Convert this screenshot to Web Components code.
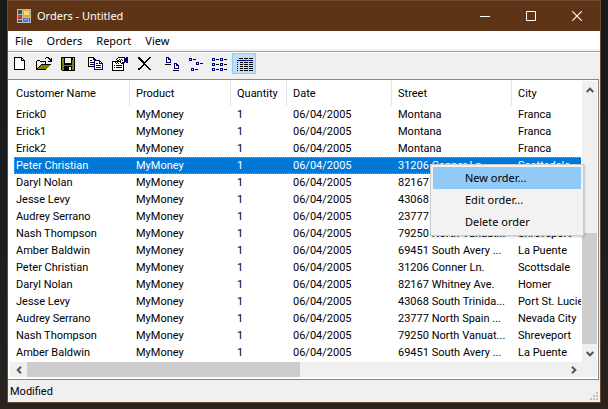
<!DOCTYPE html>
<html lang="en">
<head>
<meta charset="utf-8">
<title>Orders - Untitled</title>
<style>
  html { min-height: 100%; background: linear-gradient(#18191b, #1b1c1e 55%, #28231e); }
  body { margin: 0; font: 11px/17px Roboto, "Liberation Sans", sans-serif; color: #000; }
</style>
</head>
<body>
<orders-app></orders-app>

<script>
const make = (name, html, extra) => customElements.define(name, class extends HTMLElement {
  connectedCallback() {
    if (this.shadowRoot) return;
    const root = this.attachShadow({ mode: 'open' });
    const t = document.createElement('template');
    t.innerHTML = html;
    root.append(t.content.cloneNode(true));
    if (extra) extra(this, root);
  }
});

/* Window frame */
make('app-window', `
<style>
  :host { display: block; padding: 0 7px; }
  .frame { position: relative; border: 1px solid #6f482e; background: #f0f0f0; }
</style>
<div class="frame"><slot></slot><slot name="popup"></slot></div>`);

make('title-bar', `
<style>
  :host { display: flex; align-items: center; height: 30px; padding-left: 9px; background: #5e3417; color: #fff;
    font: 11px/16px "Noto Sans", "Open Sans", sans-serif; }
  h1 { flex: 1; margin: 0 0 0 6px; font: inherit; white-space: nowrap; }
  button { width: 46px; height: 30px; padding: 0; border: 0; background: none; color: #fff; }
  svg { display: block; margin: auto; }
</style>
<svg width="14" height="14" style="margin:0" shape-rendering="crispEdges" aria-hidden="true">
  <path fill="#b9b9b9" d="M0 0h14v14H0z"/><path fill="#4d4d4d" d="M1 1h4v4H1zM1 11h4v2H1z"/>
  <path fill="#c63325" d="M1 6h4v4H1z"/><path fill="#e9674a" d="M2 7h1v1H2z"/>
  <path fill="#e8a91d" d="M6 1h7v7H6z"/><path fill="#f9dc6c" d="M7 2h5v4H7z"/>
  <path fill="#3c78d8" d="M6 9h5v4H6z"/><path fill="#86b5ef" d="M7 10h3v1H7z"/><path fill="#555" d="M12 9h1v4h-1z"/>
</svg>
<h1><slot></slot></h1>
<button aria-label="Minimize"><svg width="10" height="10" shape-rendering="crispEdges"><path fill="#fff" d="M0 5h10v1H0z"/></svg></button>
<button aria-label="Maximize"><svg width="10" height="10"><path fill="none" stroke="#fff" d="M.5.5h9v9h-9z"/></svg></button>
<button aria-label="Close"><svg width="10" height="10"><path fill="none" stroke="#fff" stroke-width="1.2" d="M.3.3l9.4 9.4M9.7.3L.3 9.7"/></svg></button>`);

make('menu-bar', `
<style>
  :host { display: flex; height: 18px; background: #fff; border-bottom: 2px solid #f0f0f0;
    font: 11px/20px "Noto Sans", "Open Sans", sans-serif; }
</style>
<slot></slot>`);

make('menu-button', `
<style>
  button { display: block; padding: 0 7px; border: 0; background: none; color: inherit; font: inherit; }
</style>
<button><slot></slot></button>`);

/* Toolbar */
const box = (x, y) => `<path fill="#000080" fill-rule="evenodd" d="M${x} ${y}h3v3h-3zM${x + 1} ${y + 1}h1v1h-1z"/><path d="M${x + 4} ${y + 1}h3v1h-3z"/>`;
const big = (x, y) => `<path fill="#fff" d="M${x} ${y}h4v5h-4z"/><path fill="#000080" fill-rule="evenodd" d="M${x} ${y}h3v1h1v1h1v4h-5zM${x + 1} ${y + 1}v4h3v-2h-2v-2z"/><path d="M${x - 1} ${y + 7}h6v1h-6z"/>`;
const icons = {
  new: `<path d="M2 1h8v1h1v1h1v1h1v10H2z"/><path fill="#fff" d="M3 2h6v3h3v8H3z"/><path fill="#fff" d="M10 3h1v1h-1z"/>`,
  open: `<path d="M9 2h1V1h3v1h1v1h1V2h1v4h-4V5h2V4h-1V3h-1V2h-2v1H9zM1 4h3v1h6v3h5v1h-1v1h-1v1h-1v1h-1v1h-1v1H0V5h1z"/>
    <path fill="#ff0" d="M1 5h3v1h5v2H5v1H4v1H3v1H2v1H1z"/>
    <path fill="#fff" d="M1 5h1v1H1zM3 5h1v1H3zM2 6h1v1H2zM4 6h1v1H4zM6 6h1v1H6zM8 6h1v1H8zM1 7h1v1H1zM3 7h1v1H3zM5 7h1v1H5zM7 7h1v1H7zM2 8h1v1H2zM4 8h1v1H4zM1 9h1v1H1zM3 9h1v1H3zM2 10h1v1H2z"/>
    <path fill="#808000" d="M5 9h9v1h-1v1h-1v1h-1v1H2v-1h1v-1h1v-1h1z"/>`,
  save: `<path d="M1 1h14v14H2v-1H1z"/><path fill="#808000" d="M2 2h2v7h8V4h1V2h1v12h-2v-4H4v4H2z"/><path fill="#f0f0f0" d="M5 2h6v5H5zM13 2h1v1h-1zM9 11h2v3H9z"/>`,
  copy: `<path d="M0 1h6v1h1v1h1v8H0z"/><path fill="#fff" d="M1 2h4v2h2v6H1z"/><path d="M2 4h2v1H2zM2 6h4v1H2zM2 8h4v1H2z"/>
    <path fill="#000080" d="M6 4h6v1h1v1h1v1h1v7H6z"/><path fill="#fff" d="M7 5h4v3h3v5H7zM12 6h1v1h-1z"/><path fill="#000080" d="M8 7h2v1H8zM8 9h5v1H8zM8 11h5v1H8z"/>`,
  props: `<path d="M0 5h12v10H0z"/><path fill="#fff" d="M1 6h10v8H1z"/><path d="M2 9h1v1H2zM4 9h6v1H4zM2 11h1v1H2zM4 11h6v1H4z"/>
    <path d="M6 1h7v6h-2v1H9V7H8V6H7V5H5V4H4V3h1V2h1z"/><path fill="#fff" d="M6 2h6v4h-2v1H9V5H7V4H5V3h1z"/>
    <path d="M7 3h1v1H7zM9 3h1v1H9zM8 4h1v1H8zM10 4h1v1h-1zM3 6h1v1H3zM5 6h1v1H5zM4 7h1v1H4zM6 7h1v1H6z"/>
    <path fill="#000080" d="M12 2h2V1h2v6h-2V6h-2z"/>`,
  delete: `<path d="M2 1h2v1h1v1h1v1h1v1h1v1h1V5h1V4h1V3h1V2h1V1h2v1h-1v1h-1v1h-1v1h-1v1h-1v1h-1v1h1v1h1v1h1v1h1v1h1v1h1v1h-2v-1h-1v-1h-1v-1h-1v-1H9V9H8v1H7v1H6v1H5v1H4v1H2v-2h2v-1h1v-1h1V9h1V7H6V6H5V5H4V4H3V3H2z"/>`,
  large: big(2, 1) + big(10, 7),
  small: box(1, 2) + box(8, 6) + box(3, 12),
  list: [2, 7, 12].map(y => box(0, y) + box(8, y)).join(''),
  details: `<path d="M3 2h4v1H3zM8 2h4v1H8zM13 2h4v1h-4z"/><path fill="#000080" d="M1 4h16v1H1z"/>` +
    [6, 8, 10, 12, 14].map(y => `<path fill="#000080" d="M1 ${y}h1v1H1z"/><path d="M4 ${y}h3v1H4zM8 ${y}h4v1H8zM13 ${y}h4v1h-4z"/>`).join('')
};

make('tool-bar', `
<style>
  :host { display: flex; padding: 1px 0 5px; border-top: 1px solid #a0a0a0; box-shadow: inset 0 1px #fff; }
</style>
<slot></slot>`);

make('tool-gap', `<style>:host { width: 4px; }</style>`);

make('tool-button', `
<style>
  button { display: flex; align-items: center; justify-content: center; width: 24px; height: 21px; padding: 0; border: 1px solid transparent; background: none; }
  :host([pressed]) button { background: #c2def5; border-color: #90c8f6; }
  svg { display: block; overflow: visible; }
</style>
<button><svg width="16" height="16" shape-rendering="crispEdges" aria-hidden="true"></svg></button>`,
(host, root) => {
  const b = root.querySelector('button');
  b.setAttribute('aria-label', host.getAttribute('label'));
  if (host.hasAttribute('pressed')) b.setAttribute('aria-pressed', 'true');
  root.querySelector('svg').innerHTML = icons[host.getAttribute('icon')];
});

/* Scroll bars: --before, --thumb and --after give the shares of the track */
make('scroll-bar', `
<style>
  :host { display: flex; background: #f0f0f0; }
  :host([vertical]) { flex-direction: column; width: 15px; }
  :host(:not([vertical])) { height: 15px; }
  button { flex: none; width: 17px; height: 15px; padding: 0; border: 0; background: none; }
  :host([vertical]) button { width: 15px; height: 17px; }
  svg { display: block; margin: auto; }
  :host([vertical]) svg { transform: rotate(90deg); }
  .track { flex: 1; display: flex; flex-direction: inherit; }
  .a { flex: var(--before); } .thumb { flex: var(--thumb); background: #cdcdcd; } .b { flex: var(--after); }
</style>
<button aria-label="Scroll back"><svg width="8" height="8"><path fill="none" stroke="#555" stroke-width="2" d="M6 .7L2.7 4L6 7.3"/></svg></button>
<div class="track"><div class="a"></div><div class="thumb"></div><div class="b"></div></div>
<button aria-label="Scroll forward"><svg width="8" height="8"><path fill="none" stroke="#555" stroke-width="2" d="M2 .7L5.3 4L2 7.3"/></svg></button>`);

/* Order list */
const people = [
  ['Peter Christian', '31206 Conner Ln.', 'Scottsdale'],
  ['Daryl Nolan', '82167 Whitney Ave.', 'Homer'],
  ['Jesse Levy', '43068 South Trinida...', 'Port St. Lucie'],
  ['Audrey Serrano', '23777 North Spain ...', 'Nevada City'],
  ['Nash Thompson', '79250 North Vanuat...', 'Shreveport'],
  ['Amber Baldwin', '69451 South Avery ...', 'La Puente']
];
const rows = [['Erick0', 'Montana', 'Franca'], ['Erick1', 'Montana', 'Franca'], ['Erick2', 'Montana', 'Franca'], ...people, ...people];

make('order-list', `
<style>
  :host { display: grid; grid-template-columns: minmax(0, 1fr) 15px; margin-right: 1px;
    border: 1px solid #828790; border-width: 1px 1px 1px 0; background: #fff; padding: 1px 1px 2px 0; }
  .view { padding: 0 1px 1px 6px; overflow: hidden; }
  table { width: 100%; table-layout: fixed; border-collapse: collapse; }
  th, td { height: 17px; padding: 0 0 0 6px; font-weight: 400; text-align: left; white-space: nowrap; overflow: hidden; }
  th { height: 25px; padding-bottom: 1px; box-sizing: border-box; box-shadow: inset -1px 0 #e5e5e5; }
  th:last-child { box-shadow: none; }
  th:first-child, td:first-child { padding-left: 2px; }
  tr.sel { --dots: repeating-linear-gradient(90deg, #ff8728 0 1px, #0078d7 1px 2px); color: #fff;
    background: var(--dots) top / 100% 1px no-repeat, var(--dots) bottom / 100% 1px no-repeat,
      repeating-linear-gradient(#ff8728 0 1px, #0078d7 1px 2px) left / 1px 100% no-repeat, #0078d7; }
  .h { margin-left: 2px; }
  .corner { background: #f0f0f0; }
</style>
<div class="view"><table>
  <colgroup><col style="width:116px"><col style="width:101px"><col style="width:56px"><col style="width:105px"><col style="width:120px"><col></colgroup>
  <thead><tr><th>Customer Name</th><th>Product</th><th>Quantity</th><th>Date</th><th>Street</th><th>City</th></tr></thead>
  <tbody></tbody>
</table></div>
<scroll-bar vertical style="--before:134;--thumb:111;--after:1"></scroll-bar>
<scroll-bar class="h" style="--before:0;--thumb:273;--after:265"></scroll-bar>
<div class="corner"></div>`,
(host, root) => {
  root.querySelector('tbody').innerHTML = rows.map(([n, s, c], i) =>
    `<tr${i === 3 ? ' class="sel"' : ''}><td>${n}</td><td>MyMoney</td><td>1</td><td>06/04/2005</td><td>${s}</td><td>${c}</td></tr>`).join('');
});

make('status-bar', `
<style>
  :host { display: flex; align-items: center; justify-content: space-between; height: 22px; padding: 0 2px; }
  svg { align-self: flex-end; margin-bottom: 2px; }
</style>
<slot></slot>
<svg width="8" height="8" shape-rendering="crispEdges" aria-hidden="true"><path fill="#bfbfbf" d="M6 0h2v2H6zM3 3h2v2H3zM6 3h2v2H6zM0 6h2v2H0zM3 6h2v2H3zM6 6h2v2H6z"/></svg>`);

/* Popup menu over the list */
make('context-menu', `
<style>
  :host { position: absolute; left: 422px; top: 163px; width: 154px; box-sizing: border-box; padding: 2px; border: 1px solid #ccc;
    background: #f2f2f2; box-shadow: 1px 1px 2px rgba(0,0,0,.2); font: 11px/22px "Noto Sans", "Open Sans", sans-serif; }
</style>
<slot></slot>`);

make('menu-item', `
<style>
  :host { display: block; }
  button { display: block; width: 100%; height: 22px; padding: 0 0 0 32px; border: 0; background: none; color: inherit; font: inherit; text-align: left; }
  :host([active]) button { background: #91c9f7; }
</style>
<button><slot></slot></button>`);

make('orders-app', `
<style>:host { display: block; }</style>
<app-window>
  <title-bar>Orders - Untitled</title-bar>
  <menu-bar><menu-button>File</menu-button><menu-button>Orders</menu-button><menu-button>Report</menu-button><menu-button>View</menu-button></menu-bar>
  <tool-bar>
    <tool-button icon="new" label="New"></tool-button><tool-button icon="open" label="Open"></tool-button><tool-button icon="save" label="Save"></tool-button>
    <tool-gap></tool-gap>
    <tool-button icon="copy" label="Copy"></tool-button><tool-button icon="props" label="Properties"></tool-button><tool-button icon="delete" label="Delete"></tool-button>
    <tool-gap></tool-gap>
    <tool-button icon="large" label="Large icons"></tool-button><tool-button icon="small" label="Small icons"></tool-button><tool-button icon="list" label="List"></tool-button><tool-button icon="details" label="Details" pressed></tool-button>
  </tool-bar>
  <order-list></order-list>
  <status-bar>Modified</status-bar>
  <context-menu slot="popup"><menu-item active>New order...</menu-item><menu-item>Edit order...</menu-item><menu-item>Delete order</menu-item></context-menu>
</app-window>`);
</script>
</body>
</html>
